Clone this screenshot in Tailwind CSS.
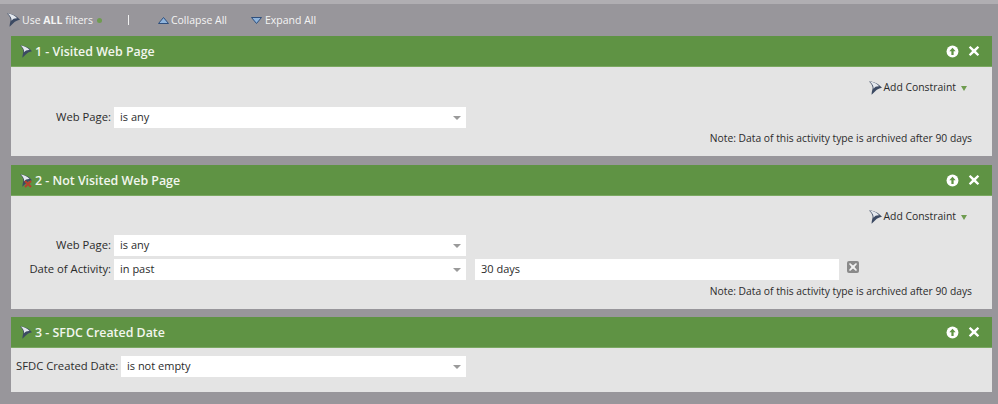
<!DOCTYPE html>
<html><head><meta charset="utf-8"><script src="https://cdn.jsdelivr.net/npm/@tailwindcss/browser@4"></script></head>
<body class="m-0">
<svg width="0" height="0" class="absolute"><defs>
<symbol id="funnel" viewBox="1 .8 12 12.6"><path d="M1 1 C5 .8 10 3 13 6.8 C10.4 7.2 8.6 8.2 7 9.8 L3.4 13.4 C3.4 11 4 9 4.4 7 C4.2 4.8 3 2.6 1 1Z" fill="#3c4a63"/><path d="M1.6 1.2 C5 1.6 8.6 3.2 10.6 5.6 C8 5.4 6.4 6.2 5.2 7.8 C5.4 5.2 3.6 2.8 1.6 1.2Z" fill="#e4e8ee"/></symbol>
<symbol id="up" viewBox="0 0 14 14"><circle cx="7" cy="7" r="6.4" fill="#fff"/><path d="M7 3 L10.4 6.8 H8.2 V10.8 H5.8 V6.8 H3.6Z" fill="#5f9344"/></symbol>
<symbol id="x" viewBox="0 0 12 12"><path d="M2.4 1 L6 4.2 L9.6 1 L11.2 2.6 L7.9 6 L11.2 9.4 L9.6 11 L6 7.8 L2.4 11 L.8 9.4 L4.1 6 L.8 2.6Z" fill="#fff"/></symbol>
</defs></svg>
<div class="w-[998px] h-[404px] overflow-hidden bg-[#98969b] font-['Open_Sans','Noto_Sans',sans-serif] text-[11.25px] text-[#2b2b2b] border-t-[4px] border-[#b0aeb2] relative">
  <div class="h-[32px] flex items-center pl-[7px] text-[#f4f4f4] text-[10.5px] leading-none">
    <svg class="w-[13px] h-[14px]"><use href="#funnel"/></svg>
    <span class="ml-[2px]">Use <b class="font-bold">ALL</b> filters</span>
    <span class="ml-[4px] w-[5px] h-[5px] rounded-full bg-[#6f9c50]"></span>
    <span class="ml-[26px] w-px h-[10px] bg-[#f0f0f0]"></span>
    <svg class="ml-[29px] w-[11px] h-[7px]" viewBox="0 0 11 7"><path d="M5.5 .5 L10.5 6.5 H.5Z" fill="#8fb4dc" stroke="#2f4f7d"/></svg>
    <span class="ml-[2px]">Collapse All</span>
    <svg class="ml-[24px] w-[11px] h-[7px]" viewBox="0 0 11 7"><path d="M.5 .5 H10.5 L5.5 6.5Z" fill="#8fb4dc" stroke="#2f4f7d"/></svg>
    <span class="ml-[3px]">Expand All</span>
  </div>
  <div class="ml-[11px] w-[981px] flex flex-col gap-[9px]">
    <section>
      <div class="h-[31px] bg-[#5f9344] flex items-center pl-[9px] pr-[12px] border-b border-[#7ba862]">
        <svg class="w-[12px] h-[13px]"><use href="#funnel"/></svg>
        <h2 class="ml-[3px] pt-[2px] text-[12.4px] font-semibold text-[#f2f6ee] leading-none">1 - Visited Web Page</h2>
        <svg class="ml-auto w-[13px] h-[13px]"><use href="#up"/></svg>
        <svg class="ml-[9px] w-[12px] h-[12px]"><use href="#x"/></svg>
      </div>
      <div class="h-[89px] bg-[#e4e4e4] pt-[14px] pr-[25px] flex flex-col">
        <div class="flex items-center justify-end h-[14px] text-[10.4px]">
          <svg class="w-[13px] h-[14px] mr-[1px]"><use href="#funnel"/></svg>
          <span>Add Constraint</span>
          <span class="ml-[5px] w-0 h-0 border-x-[3px] border-x-transparent border-t-[5px] border-t-[#6f9c50]"></span>
        </div>
        <div class="mt-[12px] flex items-center h-[21px]">
          <span class="w-[100px] text-right">Web Page:</span>
          <div class="ml-[3px] w-[352px] h-[21px] bg-white flex items-center justify-between pl-[6px] pr-[5px] text-[11px]"><span>is any</span><span class="w-0 h-0 border-x-[4px] border-x-transparent border-t-[4px] border-t-[#9a9a9a]"></span></div>
        </div>
        <p class="mt-[2px] text-right text-[10.3px] leading-[16px] -mr-[5px]">Note: Data of this activity type is archived after 90 days</p>
      </div>
    </section>
    <section>
      <div class="h-[31px] bg-[#5f9344] flex items-center pl-[9px] pr-[12px] border-b border-[#7ba862]">
        <span class="relative w-[12px] h-[13px]"><svg class="w-[12px] h-[13px]"><use href="#funnel"/></svg><svg class="absolute left-[4px] top-[6px] w-[8px] h-[8px]" viewBox="0 0 8 8"><path d="M1 1 L7 7 M7 1 L1 7" stroke="#b5402f" stroke-width="2"/></svg></span>
        <h2 class="ml-[3px] pt-[2px] text-[12.4px] font-semibold text-[#f2f6ee] leading-none">2 - Not Visited Web Page</h2>
        <svg class="ml-auto w-[13px] h-[13px]"><use href="#up"/></svg>
        <svg class="ml-[9px] w-[12px] h-[12px]"><use href="#x"/></svg>
      </div>
      <div class="h-[113px] bg-[#e4e4e4] pt-[14px] pr-[25px] flex flex-col">
        <div class="flex items-center justify-end h-[14px] text-[10.4px]">
          <svg class="w-[13px] h-[14px] mr-[1px]"><use href="#funnel"/></svg>
          <span>Add Constraint</span>
          <span class="ml-[5px] w-0 h-0 border-x-[3px] border-x-transparent border-t-[5px] border-t-[#6f9c50]"></span>
        </div>
        <div class="mt-[11px] flex items-center h-[21px]">
          <span class="w-[100px] text-right">Web Page:</span>
          <div class="ml-[3px] w-[352px] h-[21px] bg-white flex items-center justify-between pl-[6px] pr-[5px] text-[11px]"><span>is any</span><span class="w-0 h-0 border-x-[4px] border-x-transparent border-t-[4px] border-t-[#9a9a9a]"></span></div>
        </div>
        <div class="mt-[3px] flex items-center h-[21px]">
          <span class="w-[100px] text-right">Date of Activity:</span>
          <div class="ml-[3px] w-[352px] h-[21px] bg-white flex items-center justify-between pl-[6px] pr-[5px] text-[11px]"><span>in past</span><span class="w-0 h-0 border-x-[4px] border-x-transparent border-t-[4px] border-t-[#9a9a9a]"></span></div>
          <div class="ml-[9px] w-[364px] h-[21px] bg-white flex items-center pl-[6px] text-[11px]">30 days</div>
          <svg class="ml-[8px] -mt-[6px] w-[12px] h-[12px]" viewBox="0 0 12 12"><rect width="12" height="12" rx="2" fill="#8a8a8a"/><path d="M3 2 L6 4.5 L9 2 L10 3 L7.5 6 L10 9 L9 10 L6 7.5 L3 10 L2 9 L4.5 6 L2 3Z" fill="#f2f2f2"/></svg>
        </div>
        <p class="mt-[3px] text-right text-[10.3px] leading-[16px] -mr-[5px]">Note: Data of this activity type is archived after 90 days</p>
      </div>
    </section>
    <section class="-mt-[1px]">
      <div class="h-[31px] bg-[#5f9344] flex items-center pl-[9px] pr-[12px] border-b border-[#7ba862]">
        <svg class="w-[12px] h-[13px]"><use href="#funnel"/></svg>
        <h2 class="ml-[3px] pt-[2px] text-[12.4px] font-semibold text-[#f2f6ee] leading-none">3 - SFDC Created Date</h2>
        <svg class="ml-auto w-[13px] h-[13px]"><use href="#up"/></svg>
        <svg class="ml-[9px] w-[12px] h-[12px]"><use href="#x"/></svg>
      </div>
      <div class="h-[44px] bg-[#e4e4e4] pt-[8px] pl-[5px] flex flex-col">
        <div class="flex items-center h-[21px]">
          <span class="w-[101px] whitespace-nowrap">SFDC Created Date:</span>
          <div class="ml-[4px] w-[345px] h-[21px] bg-white flex items-center justify-between pl-[6px] pr-[5px] text-[11px]"><span>is not empty</span><span class="w-0 h-0 border-x-[4px] border-x-transparent border-t-[4px] border-t-[#9a9a9a]"></span></div>
        </div>
      </div>
    </section>
  </div>
</div>
</body></html>
